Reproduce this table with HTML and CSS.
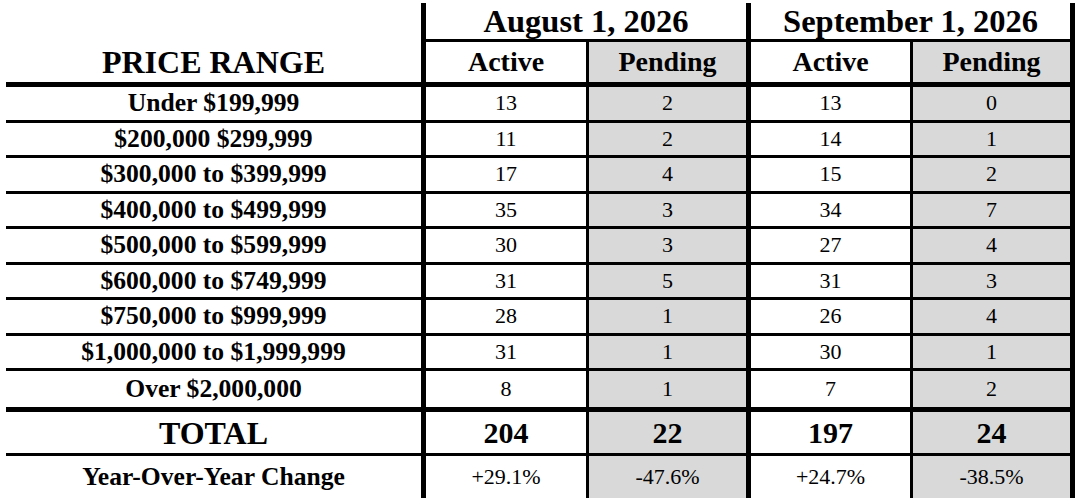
FILE: index.html
```html
<!DOCTYPE html>
<html lang="en">
<head>
<meta charset="utf-8">
<title>Price Range Inventory</title>
<link rel="stylesheet" href="styles.css">
</head>
<body>
<div class="sheet">
  <div class="row r-date">
    <div class="cell lab"></div>
    <div class="cell date g1">August 1, 2026</div>
    <div class="cell date g2">September 1, 2026</div>
  </div>
  <div class="row r-head">
    <div class="cell lab title">PRICE RANGE</div>
    <div class="cell act c2 hd">Active</div>
    <div class="cell pend c3 hd">Pending</div>
    <div class="cell act c4 hd">Active</div>
    <div class="cell pend c5 hd">Pending</div>
  </div>
  <div class="row r-data">
    <div class="cell lab">Under $199,999</div>
    <div class="cell act c2">13</div><div class="cell pend c3">2</div>
    <div class="cell act c4">13</div><div class="cell pend c5">0</div>
  </div>
  <div class="row r-data">
    <div class="cell lab">$200,000 $299,999</div>
    <div class="cell act c2">11</div><div class="cell pend c3">2</div>
    <div class="cell act c4">14</div><div class="cell pend c5">1</div>
  </div>
  <div class="row r-data">
    <div class="cell lab">$300,000 to $399,999</div>
    <div class="cell act c2">17</div><div class="cell pend c3">4</div>
    <div class="cell act c4">15</div><div class="cell pend c5">2</div>
  </div>
  <div class="row r-data">
    <div class="cell lab">$400,000 to $499,999</div>
    <div class="cell act c2">35</div><div class="cell pend c3">3</div>
    <div class="cell act c4">34</div><div class="cell pend c5">7</div>
  </div>
  <div class="row r-data">
    <div class="cell lab">$500,000 to $599,999</div>
    <div class="cell act c2">30</div><div class="cell pend c3">3</div>
    <div class="cell act c4">27</div><div class="cell pend c5">4</div>
  </div>
  <div class="row r-data">
    <div class="cell lab">$600,000 to $749,999</div>
    <div class="cell act c2">31</div><div class="cell pend c3">5</div>
    <div class="cell act c4">31</div><div class="cell pend c5">3</div>
  </div>
  <div class="row r-data">
    <div class="cell lab">$750,000 to $999,999</div>
    <div class="cell act c2">28</div><div class="cell pend c3">1</div>
    <div class="cell act c4">26</div><div class="cell pend c5">4</div>
  </div>
  <div class="row r-data">
    <div class="cell lab">$1,000,000 to $1,999,999</div>
    <div class="cell act c2">31</div><div class="cell pend c3">1</div>
    <div class="cell act c4">30</div><div class="cell pend c5">1</div>
  </div>
  <div class="row r-last">
    <div class="cell lab">Over $2,000,000</div>
    <div class="cell act c2">8</div><div class="cell pend c3">1</div>
    <div class="cell act c4">7</div><div class="cell pend c5">2</div>
  </div>
  <div class="row r-total">
    <div class="cell lab total">TOTAL</div>
    <div class="cell act c2 big">204</div><div class="cell pend c3 big">22</div>
    <div class="cell act c4 big">197</div><div class="cell pend c5 big">24</div>
  </div>
  <div class="row r-yoy">
    <div class="cell lab">Year-Over-Year Change</div>
    <div class="cell act c2">+29.1%</div><div class="cell pend c3">-47.6%</div>
    <div class="cell act c4">+24.7%</div><div class="cell pend c5">-38.5%</div>
  </div>
</div>
</body>
</html>
```
FILE: styles.css
```css
* { box-sizing: border-box; }

html, body {
  margin: 0;
  padding: 0;
  background: #ffffff;
}

body {
  font-family: "Liberation Serif", "Times New Roman", serif;
  color: #000;
}

.sheet {
  margin: 3px 0 0 6px;
  width: 1069px;
  display: grid;
  grid-template-columns: 415px 165px 160px 164px 165px;
  grid-template-rows: 39px 45px repeat(8, 35.5px) 41px 44px 42px;
}

.row { display: contents; }

.cell {
  display: flex;
  align-items: center;
  justify-content: center;
  font-size: 22px;
  line-height: 1;
  white-space: nowrap;
}

.lab {
  font-weight: bold;
  font-size: 25.6px;
}

.title { font-size: 32px; }
.total { font-size: 32px; }

.date {
  grid-column: span 2;
  font-weight: bold;
  font-size: 32.5px;
  border-bottom: 3px solid #000;
}
.date.g1 { border-left: 5px solid #000; }
.date.g2 { border-left: 5px solid #000; border-right: 5px solid #000; }

.c2 { border-left: 5px solid #000; }
.c3 { border-left: 3px solid #000; }
.c4 { border-left: 5px solid #000; }
.c5 { border-left: 3px solid #000; border-right: 5px solid #000; }

.pend { background: #d9d9d9; }

.hd { font-weight: bold; font-size: 28px; }
.big { font-weight: bold; font-size: 30px; }

.r-head > .cell { border-bottom: 5px solid #000; }
.r-data > .cell { border-bottom: 3px solid #000; }
.r-last > .cell { border-bottom: 5px solid #000; }
.r-total > .cell { border-bottom: 3px solid #000; }
```
